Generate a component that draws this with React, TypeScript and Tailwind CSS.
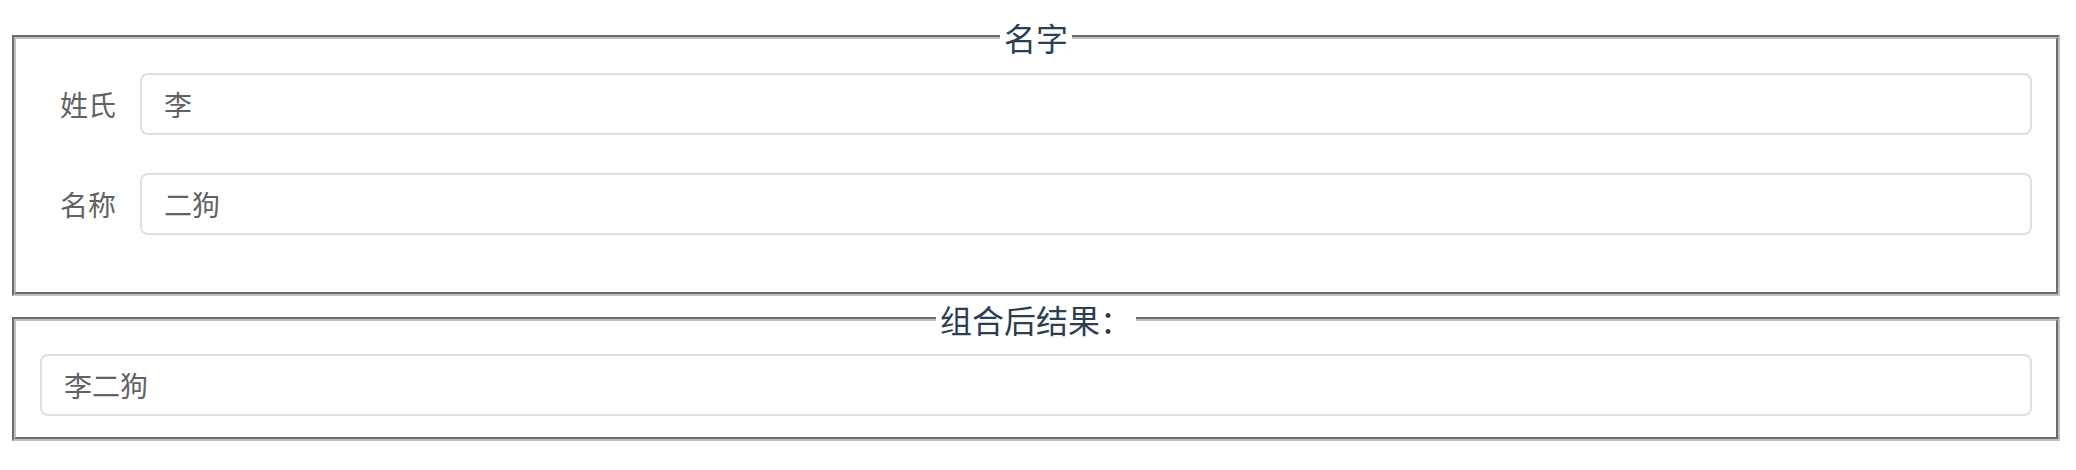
import { useState } from 'react';

const inputCls =
  "w-full h-[62px] border-2 border-[#dcdfe6] rounded-[8px] px-[22px] text-[28px] text-[#606266] bg-white outline-none";

export default function App() {
  const [lastName, setLastName] = useState('李');
  const [firstName, setFirstName] = useState('二狗');

  return (
    <div className="w-[2076px] h-[470px] bg-white font-['Noto_Sans_CJK_SC',sans-serif]">
      {/* 名字 */}
      <fieldset className="ml-[12px] mr-[16px] mt-[15px] border-4 [border-style:groove] border-[#c0c0c0] px-[24px] pt-[14px] pb-[19px]">
        <legend className="mx-auto px-[4px] text-[32px] leading-[44px] text-[#2c3e50]">名字</legend>
        <div className="flex items-center mb-[38px]">
          <label className="w-[100px] shrink-0 pr-[24px] text-right text-[28px] leading-[62px] text-[#606266]">姓氏</label>
          <input className={inputCls} value={lastName} onChange={(e) => setLastName(e.target.value)} />
        </div>
        <div className="flex items-center mb-[38px]">
          <label className="w-[100px] shrink-0 pr-[24px] text-right text-[28px] leading-[62px] text-[#606266]">名称</label>
          <input className={inputCls} value={firstName} onChange={(e) => setFirstName(e.target.value)} />
        </div>
      </fieldset>

      {/* 组合后结果 */}
      <fieldset className="ml-[12px] mr-[16px] mt-[1px] border-4 [border-style:groove] border-[#c0c0c0] px-[24px] pt-[13px] pb-[21px]">
        <legend className="mx-auto px-[4px] text-[32px] leading-[44px] text-[#2c3e50]">组合后结果：</legend>
        <input className={inputCls} value={lastName + firstName} readOnly />
      </fieldset>
    </div>
  );
}
